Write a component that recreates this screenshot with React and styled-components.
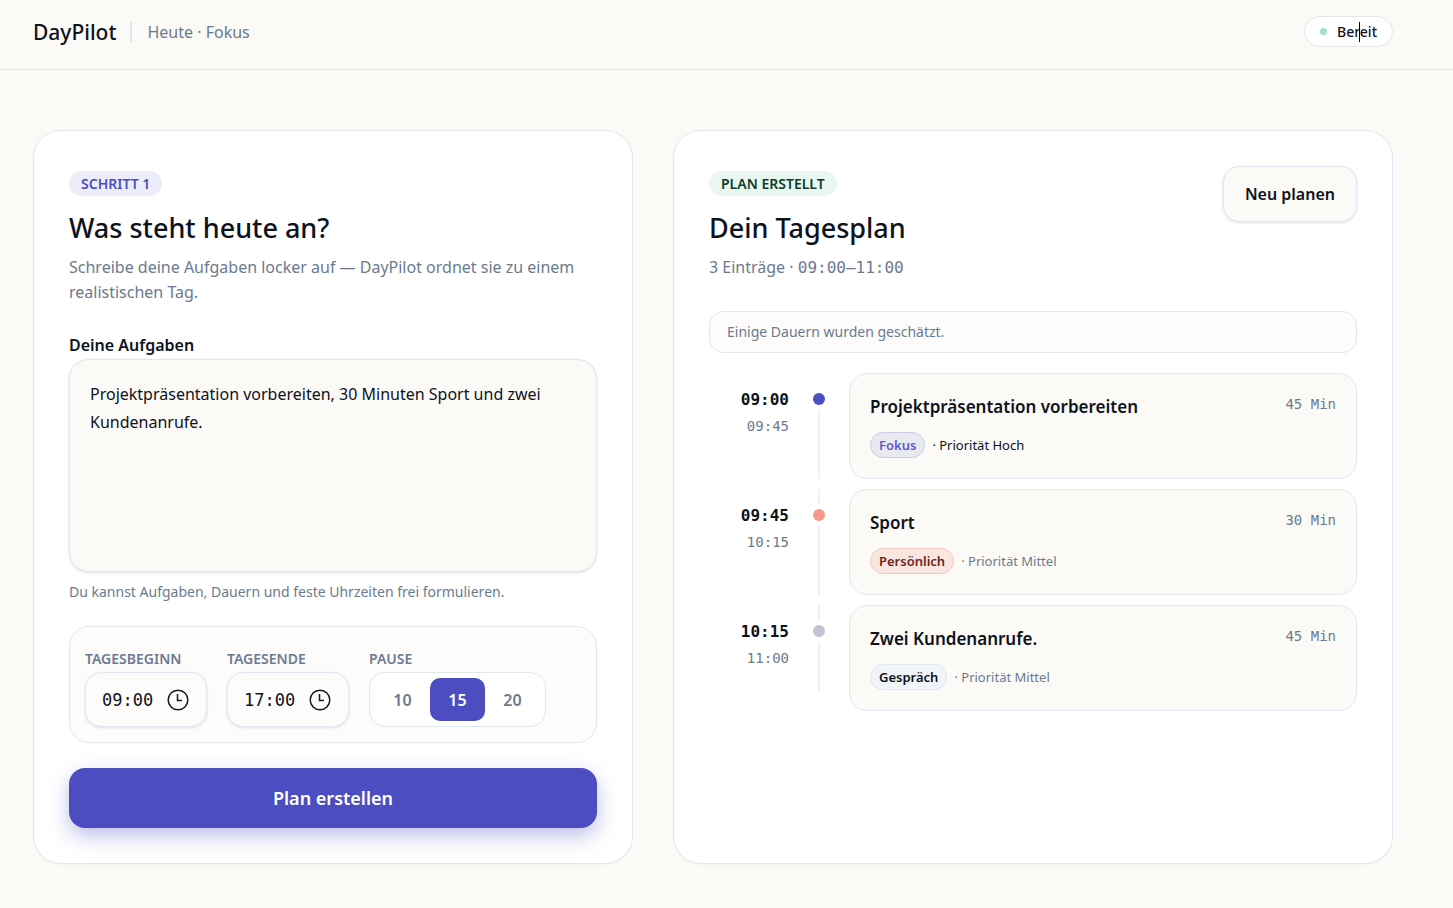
import React, { useState } from "react";
import styled, { createGlobalStyle } from "styled-components";

const GlobalStyle = createGlobalStyle`
    :root {
        --ink: #0d121c;
        --muted: #6b7a90;
        --line: #e2e6f0;
        --page: #fbfaf6;
        --soft: #fdfcfb;
        --primary: #4b4dc1;
        --mono: "DejaVu Sans Mono", "Liberation Mono", monospace;
    }

    * {
        box-sizing: border-box;
    }

    body {
        margin: 0;
        min-height: 100vh;
        background: var(--page);
        color: var(--ink);
        font-family: "Noto Sans", "Open Sans", sans-serif;
        font-size: 16px;
    }

    button,
    input,
    textarea {
        font-family: inherit;
        color: inherit;
    }
`;

const pauses = [10, 15, 20];

const entries = [
    {
        start: "09:00",
        end: "09:45",
        title: "Projektpräsentation vorbereiten",
        kind: "focus",
        tag: "Fokus",
        priority: "Hoch",
        duration: 45,
    },
    {
        start: "09:45",
        end: "10:15",
        title: "Sport",
        kind: "personal",
        tag: "Persönlich",
        priority: "Mittel",
        duration: 30,
    },
    {
        start: "10:15",
        end: "11:00",
        title: "Zwei Kundenanrufe.",
        kind: "call",
        tag: "Gespräch",
        priority: "Mittel",
        duration: 45,
    },
];

const kinds = {
    focus: {
        dot: "#4b4dc1",
        color: "#5b5bc9",
        background: "#e9e9f2",
        border: "#cccbe9",
    },
    personal: {
        dot: "#f09a87",
        color: "#6d2419",
        background: "#fae6e0",
        border: "#f5c8be",
    },
    call: {
        dot: "#c0c4d0",
        color: "#0d121c",
        background: "#f1f4f9",
        border: "#e2e6f0",
    },
};

const App = () => {
    const [tasks, setTasks] = useState(
        "Projektpräsentation vorbereiten, 30 Minuten Sport und zwei Kundenanrufe.",
    );
    const [dayStart, setDayStart] = useState("09:00");
    const [dayEnd, setDayEnd] = useState("17:00");
    const [pause, setPause] = useState(15);

    return (
        <>
            <GlobalStyle />
            <Header>
                <Brand>DayPilot</Brand>
                <Divider />
                <Subtitle>Heute · Fokus</Subtitle>
                <Status>
                    <StatusDot />
                    <StatusText>
                        Bereit
                        <Caret />
                    </StatusText>
                </Status>
            </Header>
            <Main>
                <Card>
                    <Pill>SCHRITT 1</Pill>
                    <Title>Was steht heute an?</Title>
                    <Lead>
                        Schreibe deine Aufgaben locker auf — DayPilot ordnet
                        sie zu einem realistischen Tag.
                    </Lead>
                    <TasksLabel htmlFor="tasks">Deine Aufgaben</TasksLabel>
                    <TasksInput
                        id="tasks"
                        value={tasks}
                        onChange={(e) => setTasks(e.target.value)}
                    />
                    <Hint>
                        Du kannst Aufgaben, Dauern und feste Uhrzeiten frei
                        formulieren.
                    </Hint>
                    <Settings>
                        <TimeField
                            id="day-start"
                            label="TAGESBEGINN"
                            value={dayStart}
                            setValue={setDayStart}
                        />
                        <TimeField
                            id="day-end"
                            label="TAGESENDE"
                            value={dayEnd}
                            setValue={setDayEnd}
                        />
                        <div>
                            <SettingLabel as="div" id="pause-label">
                                PAUSE
                            </SettingLabel>
                            <Segments role="group" aria-labelledby="pause-label">
                                {pauses.map((minutes) => (
                                    <Segment
                                        key={minutes}
                                        type="button"
                                        $active={minutes === pause}
                                        aria-pressed={minutes === pause}
                                        onClick={() => setPause(minutes)}
                                    >
                                        {minutes}
                                    </Segment>
                                ))}
                            </Segments>
                        </div>
                    </Settings>
                    <SubmitButton type="button">Plan erstellen</SubmitButton>
                </Card>
                <Card>
                    <PlanHead>
                        <div>
                            <Pill $done>PLAN ERSTELLT</Pill>
                            <Title>Dein Tagesplan</Title>
                            <Lead>
                                3 Einträge · <Range>09:00–11:00</Range>
                            </Lead>
                        </div>
                        <ResetButton type="button">Neu planen</ResetButton>
                    </PlanHead>
                    <Notice>Einige Dauern wurden geschätzt.</Notice>
                    <Timeline>
                        {entries.map((entry) => (
                            <Entry key={entry.start} entry={entry} />
                        ))}
                    </Timeline>
                </Card>
            </Main>
        </>
    );
};

export default App;

const TimeField = ({ id, label, value, setValue }) => (
    <div>
        <SettingLabel htmlFor={id}>{label}</SettingLabel>
        <TimeBox>
            <TimeInput
                id={id}
                type="text"
                value={value}
                onChange={(e) => setValue(e.target.value)}
            />
            <ClockIcon viewBox="0 0 22 22" aria-hidden="true">
                <circle cx="11" cy="11" r="9.8" />
                <path d="M10.5 5v6.5h4.5" />
            </ClockIcon>
        </TimeBox>
    </div>
);

const Entry = ({ entry }) => (
    <EntryRow>
        <Times>
            <StartTime>{entry.start}</StartTime>
            <EndTime>{entry.end}</EndTime>
        </Times>
        <Rail>
            <RailTop />
            <RailDot $kind={entry.kind} />
            <RailLine />
        </Rail>
        <EntryCard>
            <div>
                <EntryTitle>{entry.title}</EntryTitle>
                <Meta>
                    <Tag $kind={entry.kind}>{entry.tag}</Tag>
                    <Priority $high={entry.priority === "Hoch"}>
                        · Priorität {entry.priority}
                    </Priority>
                </Meta>
            </div>
            <Duration>{entry.duration} Min</Duration>
        </EntryCard>
    </EntryRow>
);

const Header = styled.header`
    display: flex;
    align-items: center;
    padding: 16px 60px 22px 33px;
    border-bottom: 1px solid var(--line);
`;

const Brand = styled.div`
    font-size: 21px;
    font-weight: 500;
    line-height: 30px;
`;

const Divider = styled.div`
    width: 2px;
    height: 20px;
    margin: 0 15px 0 14px;
    background: var(--line);
`;

const Subtitle = styled.div`
    font-size: 16px;
    line-height: 24px;
    color: var(--muted);
`;

const Status = styled.div`
    display: flex;
    align-items: center;
    gap: 10px;
    margin-left: auto;
    padding: 5px 15px;
    border: 1px solid var(--line);
    border-radius: 16px;
    background: white;
    font-size: 14px;
    font-weight: 500;
    line-height: 19px;
`;

const StatusDot = styled.span`
    width: 7px;
    height: 7px;
    border-radius: 50%;
    background: #a3e2c1;
`;

const StatusText = styled.span`
    position: relative;
`;

const Caret = styled.span`
    position: absolute;
    top: 0;
    left: 55%;
    width: 1px;
    height: 20px;
    background: black;
`;

const Main = styled.main`
    display: grid;
    grid-template-columns: 5fr 6fr;
    gap: 40px;
    padding: 60px 60px 44px 33px;

    @media (max-width: 1000px) {
        grid-template-columns: 1fr;
    }
`;

const Card = styled.section`
    min-width: 0;
    padding: 35px;
    border: 1px solid var(--line);
    border-radius: 28px;
    background: white;
    box-shadow: 0 1px 2px rgba(15, 23, 42, 0.03);
`;

const Pill = styled.div`
    width: fit-content;
    margin-top: 5px;
    padding: 0 12px;
    border-radius: 13px;
    font-size: 14px;
    font-weight: 600;
    line-height: 25px;
    color: ${({ $done }) => ($done ? "#0d3b2a" : "var(--primary)")};
    background: ${({ $done }) => ($done ? "#e8f8f0" : "#ededf9")};
`;

const Title = styled.h2`
    margin: 13px 0 8px;
    font-size: 27px;
    font-weight: 500;
    line-height: 38px;
`;

const Lead = styled.p`
    margin: 0;
    font-size: 16px;
    line-height: 25px;
    color: var(--muted);
`;

const TasksLabel = styled.label`
    display: block;
    margin: 28px 0 2px;
    font-size: 16px;
    font-weight: 600;
    line-height: 24px;
`;

const TasksInput = styled.textarea`
    display: block;
    width: 100%;
    height: 213px;
    padding: 20px;
    border: 1px solid var(--line);
    border-radius: 20px;
    background: var(--page);
    box-shadow: 0 1px 3px rgba(15, 23, 42, 0.12);
    font-size: 16px;
    line-height: 28px;
    resize: none;
`;

const Hint = styled.p`
    margin: 10px 0 24px;
    font-size: 14px;
    line-height: 20px;
    color: var(--muted);
`;

const Settings = styled.div`
    display: flex;
    flex-wrap: wrap;
    gap: 20px;
    padding: 22px 15px 15px;
    border: 1px solid var(--line);
    border-radius: 20px;
    background: var(--soft);
`;

const SettingLabel = styled.label`
    display: block;
    margin-bottom: 3px;
    font-size: 14px;
    font-weight: 600;
    line-height: 20px;
    color: var(--muted);
`;

const TimeBox = styled.div`
    display: flex;
    align-items: center;
    justify-content: space-between;
    width: 122px;
    height: 55px;
    padding: 0 17px 0 16px;
    border: 1px solid var(--line);
    border-radius: 16px;
    background: var(--soft);
    box-shadow: 0 1px 3px rgba(15, 23, 42, 0.12);
`;

const TimeInput = styled.input`
    width: 56px;
    padding: 0;
    border: 0;
    background: none;
    font-family: var(--mono);
    font-size: 17px;
`;

const ClockIcon = styled.svg`
    width: 22px;
    height: 22px;
    fill: none;
    stroke: #1a1a1a;
    stroke-width: 1.5;
`;

const Segments = styled.div`
    display: flex;
    height: 55px;
    padding: 5px;
    border: 1px solid var(--line);
    border-radius: 16px;
    background: white;
`;

const Segment = styled.button`
    width: 55px;
    padding: 0;
    border: 0;
    border-radius: 10px;
    font-size: 16px;
    font-weight: 600;
    cursor: pointer;
    color: ${({ $active }) => ($active ? "white" : "var(--muted)")};
    background: ${({ $active }) => ($active ? "var(--primary)" : "none")};
`;

const SubmitButton = styled.button`
    display: block;
    width: 100%;
    height: 60px;
    margin-top: 25px;
    border: 0;
    border-radius: 16px;
    background: var(--primary);
    box-shadow: 0 8px 20px rgba(75, 77, 193, 0.36);
    color: white;
    font-size: 18px;
    font-weight: 600;
    cursor: pointer;
`;

const PlanHead = styled.div`
    display: flex;
    align-items: flex-start;
    justify-content: space-between;
`;

const Range = styled.span`
    font-family: var(--mono);
`;

const ResetButton = styled.button`
    height: 56px;
    padding: 0 21px;
    border: 1px solid var(--line);
    border-radius: 16px;
    background: var(--page);
    box-shadow: 0 1px 3px rgba(15, 23, 42, 0.12);
    font-size: 16px;
    font-weight: 600;
    cursor: pointer;
`;

const Notice = styled.div`
    margin: 31px 0 20px;
    padding: 10px 17px;
    border: 1px solid var(--line);
    border-radius: 14px;
    background: var(--soft);
    font-size: 14px;
    line-height: 20px;
    color: var(--muted);
`;

const Timeline = styled.ol`
    display: flex;
    flex-direction: column;
    gap: 10px;
    margin: 0;
    padding: 0;
    list-style: none;
`;

const EntryRow = styled.li`
    display: grid;
    grid-template-columns: 80px 20px 1fr;
    gap: 20px;
`;

const Times = styled.div`
    padding-top: 14px;
    font-family: var(--mono);
    line-height: 26px;
    text-align: right;
`;

const StartTime = styled.div`
    font-size: 16px;
    font-weight: 700;
`;

const EndTime = styled.div`
    font-size: 14px;
    color: var(--muted);
`;

const Rail = styled.div`
    display: flex;
    flex-direction: column;
    align-items: center;
    gap: 5px;

    ${EntryRow}:last-child & {
        padding-bottom: 20px;
    }
`;

const RailTop = styled.div`
    width: 2px;
    height: 15px;
    background: #eef0f6;

    ${EntryRow}:first-child & {
        background: none;
    }
`;

const RailDot = styled.div`
    width: 12px;
    height: 12px;
    border-radius: 50%;
    background: ${({ $kind }) => kinds[$kind].dot};
`;

const RailLine = styled.div`
    flex: 1;
    width: 2px;
    background: #eef0f6;
`;

const EntryCard = styled.article`
    display: flex;
    align-items: flex-start;
    justify-content: space-between;
    padding: 20px;
    border: 1px solid var(--line);
    border-radius: 18px;
    background: var(--page);
`;

const EntryTitle = styled.h3`
    margin: 0 0 12px;
    font-size: 17px;
    font-weight: 600;
    line-height: 26px;
`;

const Meta = styled.div`
    display: flex;
    align-items: center;
    gap: 7px;
    font-size: 13px;
`;

const Tag = styled.span`
    padding: 0 8px;
    border: 1px solid ${({ $kind }) => kinds[$kind].border};
    border-radius: 13px;
    color: ${({ $kind }) => kinds[$kind].color};
    background: ${({ $kind }) => kinds[$kind].background};
    font-weight: 600;
    line-height: 24px;
`;

const Priority = styled.span`
    color: ${({ $high }) => ($high ? "var(--ink)" : "var(--muted)")};
`;

const Duration = styled.div`
    font-family: var(--mono);
    font-size: 14px;
    line-height: 20px;
    white-space: nowrap;
    color: var(--muted);
`;
